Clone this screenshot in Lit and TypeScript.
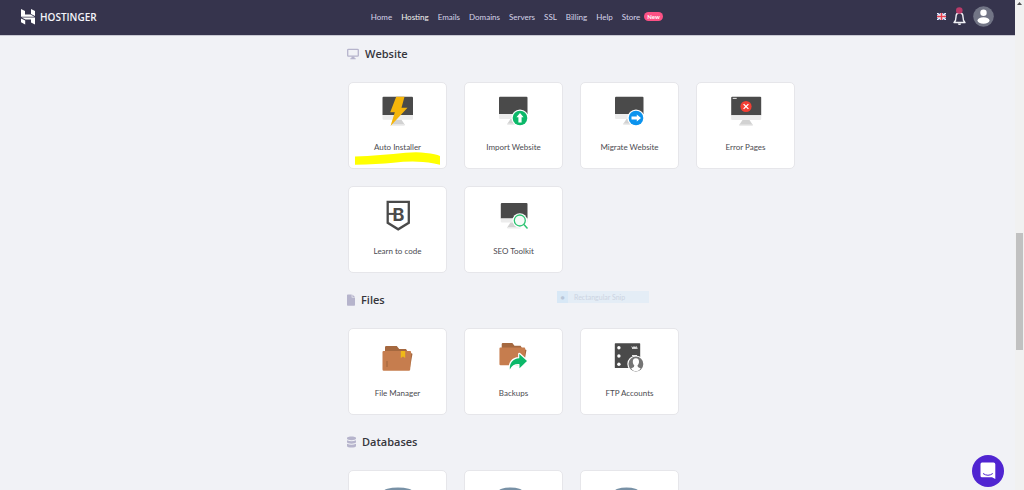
import { LitElement, html, svg, css, TemplateResult } from "lit";
import { customElement, property } from "lit/decorators.js";

const monitor = (right: number, top: number, screenBottom: number, bottom: number, left = 1) => svg`
  <path d="M${left} ${top + 1}q0-1 1-1H${right - 1}q1 0 1 1V${screenBottom}H${left}z" fill="#4a4a4a"/>
  <path d="M${left} ${screenBottom}H${right}V${bottom - 1}q0 1-1 1H${left + 1}q-1 0-1-1z" fill="#ececec"/>
  <path d="M12.500 ${bottom}h7l3 4.500v1h-13v-1z" fill="#d2d2d2"/>
  <path d="M9.500 ${bottom + 4.5}h13v1.500h-13z" fill="#ebebeb"/>`;

const folder = svg`
  <path d="M3 12V5.200Q3 4 4.200 4H14.800L17.200 6.900H24L25.500 9.500L30.500 11.800L28 26z" fill="#a5683f"/>
  <path d="M.5 10q0-1 1-1H28q1.200 0 1.100 1.200L28.200 27.500Q28 28.700 27 28.700H1.700Q.5 28.700.5 27.500z" fill="#c67d4e"/>`;

const cylinder = (rx: number, cx: number) => svg`
  <path d="M${cx - rx} 8V28H${cx + rx}V8z" fill="#5f7a90"/>
  <ellipse cx=${cx} cy="8" rx=${rx} ry="4.500" fill="#7891a6"/>`;

const art: Record<string, TemplateResult> = {
  installer: svg`${monitor(31, 0.7, 19, 23.7, 0.5)}
    <path d="M14.200.7h8.300l-3 11h6L8.500 30l4.300-13.700H8.200z" fill="#f5b50a"/>`,
  importer: svg`${monitor(29.5, 0.7, 18, 23)}
    <circle cx="22" cy="22" r="8.600" fill="#fff"/><circle cx="22" cy="22" r="7.300" fill="#0cb869"/>
    <path d="M22 17l3.600 4.200h-2v5.300h-3.200v-5.300h-2z" fill="#fff"/>`,
  migrate: svg`${monitor(29.5, 0.7, 18, 23)}
    <circle cx="22" cy="22" r="8.600" fill="#fff"/><circle cx="22" cy="22" r="7.300" fill="#0b93ee"/>
    <path d="M27 22l-4.200 3.400v-2h-5.300v-2.800h5.300v-2z" fill="#fff"/>`,
  errors: svg`${monitor(31.2, 0.8, 19.3, 24, 1.2)}
    <path d="M2.700 2.400h4" stroke="#ddd" stroke-width="1.100"/>
    <circle cx="16" cy="10.500" r="5.600" fill="#f23f34"/>
    <path d="M13.600 8.100l4.800 4.800m0-4.800l-4.800 4.800" stroke="#fff" stroke-width="1.300"/>`,
  code: svg`<path d="M5.700 1.900H26.800V22.800L16.200 29.300L5.700 22.800z" fill="#fff" stroke="#4a4a4a" stroke-width="2.300"/>
    <path d="M6 13.900h6" stroke="#4a4a4a" stroke-width="2"/>
    <text x="16.500" y="20.500" text-anchor="middle" font-family="Inter, sans-serif" font-weight="700" font-size="18" fill="#4a4a4a">B</text>`,
  seo: svg`${monitor(29.5, 3, 18.5, 22.5, 2.8)}
    <circle cx="21.800" cy="20.500" r="7.300" fill="#fff"/>
    <path d="M26 24.700l4 4" stroke="#fff" stroke-width="3.500"/>
    <circle cx="21.800" cy="20.500" r="5.500" fill="#f6fbf8" stroke="#2cc472" stroke-width="1.300"/>
    <path d="M25.900 24.600l3.600 3.900" stroke="#2cc472" stroke-width="1.500"/>`,
  files: svg`${folder}
    <path d="M18.800 9h4.400v7l-2.200-1.500L18.800 16z" fill="#efb917"/>
    <path d="M5 19v6" stroke="#a5683f" stroke-width="1.200"/>`,
  backups: svg`<g transform="translate(1 -2.500) scale(.9)">${folder}</g>
    <path d="M11.800 27.500C11.500 20.500 15 16.700 21.300 16.300V12L29 19l-7.500 7.200V22.200C17 21.700 14 23.500 11.800 27.500z" fill="#0cb869" stroke="#fff" stroke-width="2.400" paint-order="stroke" stroke-linejoin="round"/>`,
  ftp: svg`<rect x=".8" y="1.300" width="25.400" height="24.700" rx=".6" fill="#4a4a4a"/>
    <g fill="#fff"><circle cx="4.900" cy="5.700" r="1.700"/><circle cx="4.900" cy="14" r="1.700"/><circle cx="4.900" cy="22.300" r="1.700"/></g>
    <path d="M17.800 4.500l1 2L20 4.500l1 2L22.200 4.500l1 2M18 6.300h5.300M18 13.500h5" stroke="#e4e4e4" stroke-width="1" fill="none"/>
    <circle cx="21.900" cy="22" r="8.600" fill="#fff"/><circle cx="21.900" cy="22" r="7.400" fill="#757575"/>
    <path d="M21.900 16.300c2.300 0 3.100 1.500 3.100 3.400 0 1.600-.6 2.900-1.500 3.500l.4 1.800 2.800 1.400c-1 1.600-2.600 2.600-4.800 2.600s-3.800-1-4.800-2.600l2.800-1.400.4-1.800c-.9-.6-1.500-1.900-1.500-3.500 0-1.900.8-3.400 3.100-3.400z" fill="#fff"/>`,
  database: cylinder(15, 16),
  database2: cylinder(12.5, 12.5),
};

const headIcons: Record<string, TemplateResult> = {
  website: svg`<svg width="12" height="12" viewBox="0 0 12 12" aria-hidden="true"><path d="M1.500 1.300h9q.8 0 .8.800v5.300q0 .8-.8.800h-9q-.8 0-.8-.8V2.100q0-.8.8-.8z" fill="none" stroke="#b6b4cc" stroke-width="1.300"/><path d="M4.700 8.500h2.600l.4 1.700h1v1H3.300v-1h1z" fill="#b6b4cc"/></svg>`,
  files: svg`<svg width="8" height="12" viewBox="0 0 8 12" aria-hidden="true"><path d="M.8.500H4.700V3.600H8V11q0 .7-.7.700H.8Q0 11.700 0 11V1.200Q0 .5.800.5zM5.400.5L8 2.900H5.400z" fill="#b6b4cc"/></svg>`,
  databases: svg`<svg width="9" height="12" viewBox="0 0 9 12" aria-hidden="true"><g fill="#b6b4cc"><path d="M0 2C0 0 9 0 9 2V2.800C9 4.600 0 4.600 0 2.800z"/><path d="M0 4.300Q4.500 6 9 4.300V6.300C9 8.100 0 8.100 0 6.300z"/><path d="M0 7.800Q4.500 9.500 9 7.800V10C9 12 0 12 0 10z"/></g></svg>`,
};

@customElement("tool-card")
class ToolCard extends LitElement {
  @property() label = "";
  @property() icon = "";
  @property({ type: Boolean }) marked = false;

  static styles = css`
    :host { display: block; }
    .card {
      box-sizing: border-box;
      position: relative;
      display: flex;
      flex-direction: column;
      align-items: center;
      gap: 13px;
      width: 100%;
      height: 87px;
      padding: 13px 4px;
      border: 1px solid #e6e6ea;
      border-radius: 5px;
      background: #fff;
      color: #4b4b50;
      font: 8px/12px Lato, sans-serif;
      cursor: pointer;
    }
    .label { white-space: nowrap; }
    .marker { position: absolute; left: 6px; right: 6px; top: 69px; }
    .marker svg { display: block; width: 100%; height: 13px; }
  `;

  render() {
    return html`<button class="card" type="button">
      <svg width="32" height="32" viewBox="0 0 32 32" aria-hidden="true">${art[this.icon]}</svg>
      ${this.label ? html`<span class="label">${this.label}</span>` : ""}
      ${this.marked
        ? html`<span class="marker"><svg viewBox="0 0 84 13" preserveAspectRatio="none" aria-hidden="true">
            <path d="M0 4.500Q12 4 25 3T50 .8T70 1Q80 2 84 4V12.700Q72 9.700 62 9.700Q50 9.300 38 10.800Q22 12.500 0 12.700z" fill="#ff0"/></svg></span>`
        : ""}
    </button>`;
  }
}

@customElement("app-root")
class AppRoot extends LitElement {
  static styles = css`
    :host {
      display: flex;
      height: 100vh;
      overflow: hidden;
      background: #f1f2f6;
      font-family: "Open Sans", sans-serif;
    }
    .page { position: relative; flex: 1; min-width: 0; }
    .bar {
      box-sizing: border-box;
      display: flex;
      align-items: center;
      justify-content: space-between;
      height: 36px;
      padding: 0 21px 2px;
      background: #36344d;
      border-bottom: 1px solid #c9c9d3;
    }
    .brand {
      display: flex;
      align-items: center;
      gap: 5px;
      color: #f4f4fa;
      font: 600 10px/12px "Open Sans", sans-serif;
      text-decoration: none;
    }
    .nav { display: flex; gap: 9px; align-items: center; }
    .link {
      display: flex;
      align-items: center;
      gap: 4px;
      color: #d5d3e8;
      font: 8px/12px Lato, sans-serif;
      text-decoration: none;
    }
    .current { color: #f3f2ee; }
    .new {
      padding: 0 3px;
      border-radius: 5px;
      background: #fc5185;
      color: #fff;
      font-size: 6px;
      line-height: 9px;
      font-weight: 700;
    }
    .tools { display: flex; align-items: center; gap: 7px; }
    .tool { display: block; padding: 0; border: 0; background: none; cursor: pointer; }
    .tool svg { display: block; }
    .content {
      box-sizing: border-box;
      max-width: 575px;
      margin: 0 auto;
      padding: 8px 0 0 128px;
    }
    .section { margin-bottom: 17px; }
    .title {
      display: flex;
      align-items: center;
      gap: 6px;
      margin: 0 0 18px -1px;
      color: #36363c;
      font-size: 11px;
      line-height: 20px;
      font-weight: 600;
    }
    .grid { display: grid; grid-template-columns: repeat(4, minmax(0, 1fr)); gap: 17px; }
    .snip {
      position: absolute;
      left: 557px;
      top: 291px;
      display: flex;
      width: 92px;
      background: #e4edf6;
      color: #ccd4e2;
      font: 7px/12px Lato, sans-serif;
    }
    .snip-icon { width: 11px; margin-right: 6px; background: #d8e8f6; color: #b9c6d8; text-align: center; }
    .chat {
      position: fixed;
      right: 20px;
      bottom: 3px;
      display: grid;
      place-items: center;
      width: 32px;
      height: 32px;
      padding: 0;
      border: 0;
      border-radius: 50%;
      background: #5025d1;
      cursor: pointer;
    }
    .track { position: relative; width: 9px; background: #f1f1f1; }
    .arrow { display: block; margin: 2px auto; }
    .thumb { position: absolute; left: 1px; right: 1px; top: 47.5%; height: 24%; background: #c1c1c1; }
  `;

  private links = ["Home", "Hosting", "Emails", "Domains", "Servers", "SSL", "Billing", "Help", "Store"];

  private sections = [
    {
      id: "website",
      title: "Website",
      cards: [
        ["Auto Installer", "installer"],
        ["Import Website", "importer"],
        ["Migrate Website", "migrate"],
        ["Error Pages", "errors"],
        ["Learn to code", "code"],
        ["SEO Toolkit", "seo"],
      ],
    },
    {
      id: "files",
      title: "Files",
      cards: [["File Manager", "files"], ["Backups", "backups"], ["FTP Accounts", "ftp"]],
    },
    {
      id: "databases",
      title: "Databases",
      cards: [["", "database"], ["", "database2"], ["", "database2"]],
    },
  ];

  render() {
    return html`
      <div class="page">
        <header class="bar">
          <a class="brand" href="#">
            <svg width="14" height="16" viewBox="0 0 14 16" aria-hidden="true">
              <path d="M0 0L4 2V5.500H9.500L13.500 7.700H0zM10 0L14 2V7L10 5zM0 9.500L4.200 11.500V15.500L0 13.300zM.5 8.600H14V15.500L10 13.500V10.500H4.500z" fill="#fff"/>
            </svg>
            <span>HOSTINGER</span>
          </a>
          <nav class="nav">
            ${this.links.map(
              (l) => html`<a class="link ${l === "Hosting" ? "current" : ""}" href="#">${l}${l === "Store" ? html`<span class="new">New</span>` : ""}</a>`
            )}
          </nav>
          <div class="tools">
            <button class="tool" type="button" aria-label="Language">
              <svg width="9" height="7" viewBox="0 0 9 7"><path d="M0 0h9v7H0z" fill="#5267ae"/><path d="M0 0l9 7M9 0L0 7" stroke="#fff" stroke-width="1.300"/><path d="M4.500 0v7M0 3.500h9" stroke="#fff" stroke-width="2.600"/><path d="M4.500 0v7M0 3.500h9" stroke="#e8404f" stroke-width="1.500"/></svg>
            </button>
            <button class="tool" type="button" aria-label="Notifications">
              <svg width="13" height="19" viewBox="0 0 13 19"><path d="M1 15.500c1.800-1.500 2-3 2-5.500 0-2.700 1.500-4.200 3.500-4.200S10 7.300 10 10c0 2.500.2 4 2 5.500z" fill="none" stroke="#f2f2f7" stroke-width="1.400" stroke-linejoin="round"/><path d="M4.800 16.500h3.400q-.3 1.600-1.700 1.600t-1.700-1.600z" fill="#f2f2f7"/><circle cx="6.300" cy="3.500" r="3.300" fill="#b93a68"/></svg>
            </button>
            <button class="tool" type="button" aria-label="Account">
              <svg width="21" height="21" viewBox="0 0 21 21"><circle cx="10.500" cy="10.500" r="10.300" fill="#727586"/><circle cx="10.500" cy="6.700" r="3.200" fill="#fff"/><ellipse cx="10.500" cy="14.500" rx="6" ry="3.300" fill="#fff"/></svg>
            </button>
          </div>
        </header>
        <main class="content">
          ${this.sections.map(
            (s) => html`<section class="section">
              <h2 class="title">${headIcons[s.id]}<span>${s.title}</span></h2>
              <div class="grid">
                ${s.cards.map(([label, icon]) => html`<tool-card label=${label} icon=${icon} ?marked=${icon === "installer"}></tool-card>`)}
              </div>
            </section>`
          )}
        </main>
        <div class="snip"><span class="snip-icon">●</span><span>Rectangular Snip</span></div>
        <button class="chat" type="button" aria-label="Chat">
          <svg width="16" height="18" viewBox="0 0 16 18" aria-hidden="true"><path d="M2 .5H13.500Q15.300.5 15.300 2.300V17L12 15.300H2Q.5 15.300.5 13.700V2.200Q.5.5 2 .5z" fill="#fff"/><path d="M3 11.500Q8 15 12.800 11.500" fill="none" stroke="#5025d1" stroke-width="1"/></svg>
        </button>
      </div>
      <div class="track">
        <svg class="arrow" width="5" height="3" viewBox="0 0 5 3" aria-hidden="true"><path d="M0 3L2.500 0L5 3z" fill="#505050"/></svg>
        <div class="thumb"></div>
      </div>
    `;
  }
}
